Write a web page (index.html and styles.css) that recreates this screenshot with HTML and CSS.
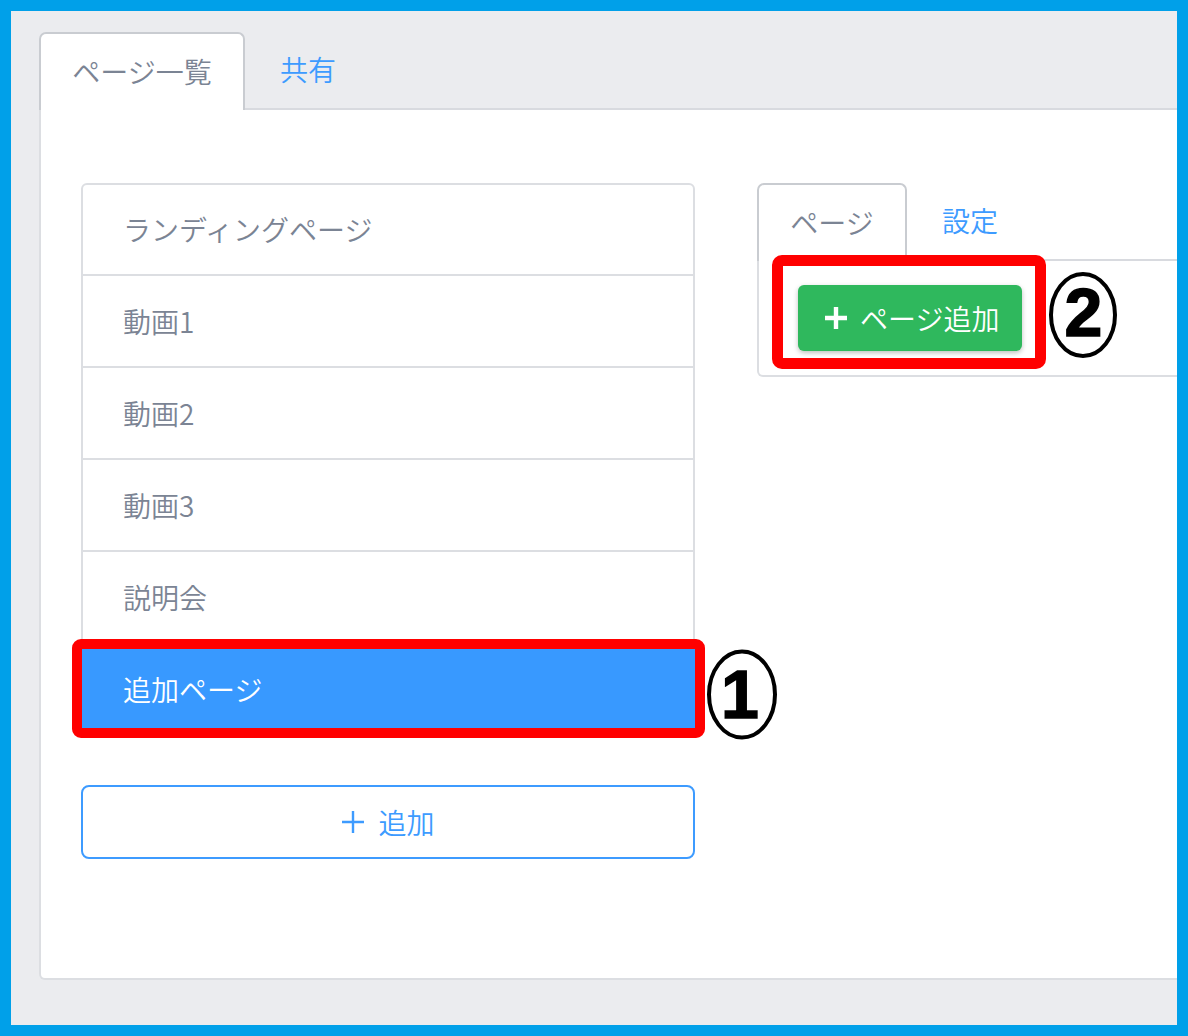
FILE: index.html
```html
<!DOCTYPE html>
<html lang="ja">
<head>
  <meta charset="UTF-8" />
  <meta name="viewport" content="width=device-width, initial-scale=1.0"/>
  <title>ページ一覧</title>
  <link rel="stylesheet" href="styles.css">
</head>
<body>

  <div class="frame">
    <div class="tabs">
      <div class="tab-bar">
        <div class="tab active wide">ページ一覧</div>
        <div class="tab">共有</div>
      </div>

      <div class="tab-panel">
        <div class="columns">

          <div class="page-col">
            <ul class="page-list">
              <li class="page-item">ランディングページ</li>
              <li class="page-item">動画1</li>
              <li class="page-item">動画2</li>
              <li class="page-item">動画3</li>
              <li class="page-item">説明会</li>
              <li class="page-item selected">
                追加ページ
                <span class="mark-box item-mark"></span>
                <svg class="mark-num num-one" width="72" height="92" viewBox="0 0 72 92">
                  <ellipse cx="36" cy="45.5" rx="33" ry="43" fill="none" stroke="#000" stroke-width="4"/>
                  <text x="34" y="69" text-anchor="middle">1</text>
                </svg>
              </li>
            </ul>

            <button class="add-btn">
              <svg width="24" height="24" viewBox="0 0 24 24"><path d="M12 1v22M1 12h22" stroke="currentColor" stroke-width="2.4" fill="none"/></svg>
              追加
            </button>
          </div>

          <div class="detail-col">
            <div class="tab-bar">
              <div class="tab active narrow">ページ</div>
              <div class="tab">設定</div>
            </div>
            <div class="sub-panel">
              <div class="mark-wrap">
                <button class="green-btn">
                  <svg width="22" height="22" viewBox="0 0 22 22"><path d="M11 0v22M0 11h22" stroke="#fff" stroke-width="4.4" fill="none"/></svg>
                  ページ追加
                </button>
                <span class="mark-box btn-mark"></span>
                <svg class="mark-num num-two" width="72" height="92" viewBox="0 0 72 92">
                  <ellipse cx="35" cy="44" rx="32" ry="41" fill="none" stroke="#000" stroke-width="4"/>
                  <text x="35.5" y="65" text-anchor="middle">2</text>
                </svg>
              </div>
            </div>
          </div>

        </div>
      </div>
    </div>
  </div>

</body>
</html>
```

FILE: styles.css
```css
* {
box-sizing: border-box;
}

body {
margin: 0;
font-family: "Noto Sans CJK JP", "Noto Sans", sans-serif;
font-weight: 350;
}

.frame {
width: 1188px;
height: 1036px;
border: 11px solid #00a0e9;
background: #ebecef;
padding: 21px 0 0 28px;
overflow: hidden;
}

.tabs {
width: 1220px;
}

.tab-bar {
display: flex;
align-items: flex-end;
border-bottom: 2px solid #d8dadf;
}

.tab {
height: 76px;
line-height: 74px;
padding: 0 35px;
font-size: 28px;
color: #3d9bff;
}

.tab.active {
height: 78px;
margin-bottom: -2px;
padding: 0;
text-align: center;
background: #fff;
border: 2px solid #c9ccd1;
border-bottom: 0;
border-radius: 7px 7px 0 0;
color: #7b8494;
}

.tab.wide {
width: 206px;
}

.tab.narrow {
width: 150px;
}

.tab-panel {
height: 870px;
background: #fff;
border: 2px solid #dcdee2;
border-top: 0;
border-radius: 0 0 0 6px;
padding: 73px 0 0 40px;
}

.columns {
display: flex;
gap: 62px;
}

.page-col {
width: 614px;
}

.page-list {
list-style: none;
margin: 0;
padding: 0;
border: 2px solid #dcdee2;
border-radius: 6px 6px 0 0;
}

.page-item {
position: relative;
height: 89px;
line-height: 89px;
padding-left: 40px;
font-size: 28px;
color: #7b8494;
}

.page-item + .page-item {
height: 92px;
line-height: 90px;
border-top: 2px solid #dcdee2;
}

.page-item.selected {
margin: 0 -2px;
padding-left: 42px;
background: #3899ff;
color: #fff;
}

.add-btn {
display: flex;
align-items: center;
justify-content: center;
gap: 13px;
width: 100%;
height: 74px;
margin-top: 49px;
background: #fff;
border: 2px solid #3d9bff;
border-radius: 8px;
color: #3d9bff;
font-family: inherit;
font-weight: inherit;
font-size: 28px;
}

.detail-col {
width: 500px;
}

.sub-panel {
border: 2px solid #dcdee2;
border-top: 0;
border-radius: 0 0 0 6px;
padding: 24px 0 24px 39px;
}

.mark-wrap {
position: relative;
width: 224px;
}

.green-btn {
display: flex;
align-items: center;
gap: 13px;
width: 224px;
height: 66px;
padding: 0 0 0 27px;
background: #2fb85d;
border: none;
border-radius: 6px;
box-shadow: 0 2px 5px rgba(0, 0, 0, 0.25);
color: #fff;
font-family: inherit;
font-weight: inherit;
font-size: 28px;
}

/* red annotation frames and circled numbers */
.mark-box {
position: absolute;
border: 10px solid #ff0000;
border-radius: 9px;
}

.item-mark {
top: -5px;
bottom: -4px;
left: -9px;
right: -10px;
}

.btn-mark {
top: -30px;
bottom: -18px;
left: -26px;
right: -24px;
border-width: 11px;
border-radius: 10px;
}

.mark-num {
position: absolute;
}

.mark-num text {
font-family: "Liberation Sans", Arial, sans-serif;
font-weight: bold;
font-size: 68px;
fill: #000;
stroke: #000;
stroke-width: 1.5;
}

.num-one {
left: calc(100% + 11px);
top: 5px;
}

.num-two {
left: 250px;
top: -14px;
}
```
